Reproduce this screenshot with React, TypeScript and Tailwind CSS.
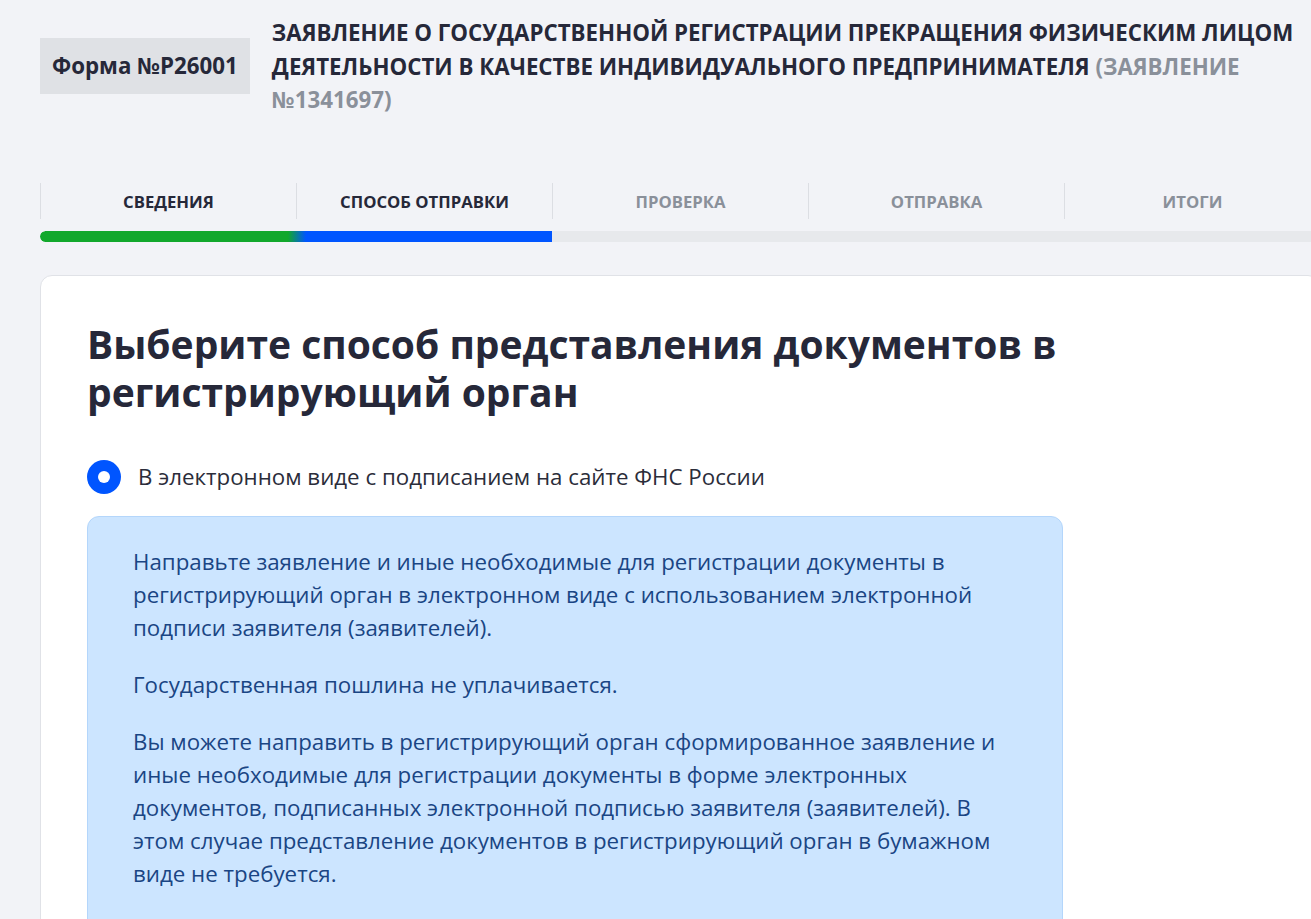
import React from "react";

const steps = [
  { label: "Сведения", active: true },
  { label: "Способ отправки", active: true },
  { label: "Проверка", active: false },
  { label: "Отправка", active: false },
  { label: "Итоги", active: false },
];

export default function App() {
  return (
    <div
      className="min-h-screen w-full overflow-hidden bg-[#f2f3f7] text-[#262839]"
      style={{ fontFamily: '"Open Sans", "Noto Sans", sans-serif' }}
    >
      <div className="w-[1280px] ml-[40px] pt-[16px]">
        {/* header */}
        <div className="flex items-start gap-[22px]">
          <div className="mt-[22px] shrink-0 h-[56px] px-[12px] flex items-center bg-[#dfe1e5] text-[22.3px] font-bold">
            Форма №Р26001
          </div>
          <h1 className="flex-1 text-[22.3px] leading-[33.5px] font-bold uppercase pr-[20px]">
            Заявление о государственной регистрации прекращения физическим лицом
            деятельности в качестве индивидуального предпринимателя{" "}
            <span className="text-[#8a909a]">(Заявление №1341697)</span>
          </h1>
        </div>

        {/* steps */}
        <div className="mt-[66px] grid grid-cols-5">
          {steps.map((s) => (
            <div
              key={s.label}
              className={`h-[36px] pt-[2px] border-l border-[#dcdee3] flex items-center justify-center text-[16.7px] font-bold uppercase ${
                s.active ? "text-[#262839]" : "text-[#8a909a]"
              }`}
            >
              {s.label}
            </div>
          ))}
        </div>
        <div className="mt-[12px] h-[11px] rounded-l-full bg-[#e7e9ec] overflow-hidden">
          <div className="h-full w-[512px] rounded-l-full bg-[linear-gradient(90deg,#12a82c_0,#12a82c_248px,#0055ff_266px,#0055ff_100%)]" />
        </div>

        {/* card */}
        <div className="mt-[33px] bg-white border border-[#e0e2e7] rounded-[12px] min-h-[700px] pl-[46px] pt-[44px]">
          <div className="w-[976px]">
            <h2 className="text-[39px] leading-[48px] font-bold text-[#262839]">
              Выберите способ представления документов в регистрирующий орган
            </h2>

            <label className="mt-[44px] flex items-center gap-[17px] cursor-pointer">
              <span className="w-[34px] h-[34px] rounded-full bg-[#0055ff] flex items-center justify-center">
                <span className="w-[12px] h-[12px] rounded-full bg-white" />
              </span>
              <span className="text-[22.3px] leading-[33px] text-[#2b2d3a]">
                В электронном виде с подписанием на сайте ФНС России
              </span>
            </label>

            <div className="mt-[22px] bg-[#cce5ff] border border-[#b4d6fb] rounded-[12px] px-[45px] pt-[28px] pb-[40px] text-[22.3px] leading-[33px] text-[#1a4584] flex flex-col gap-[24px]">
              <p>
                Направьте заявление и иные необходимые для регистрации документы в
                регистрирующий орган в электронном виде с использованием
                электронной подписи заявителя (заявителей).
              </p>
              <p>Государственная пошлина не уплачивается.</p>
              <p>
                Вы можете направить в регистрирующий орган сформированное заявление
                и иные необходимые для регистрации документы в форме электронных
                документов, подписанных электронной подписью заявителя
                (заявителей). В этом случае представление документов в
                регистрирующий орган в бумажном виде не требуется.
              </p>
            </div>
          </div>
        </div>
      </div>
    </div>
  );
}
